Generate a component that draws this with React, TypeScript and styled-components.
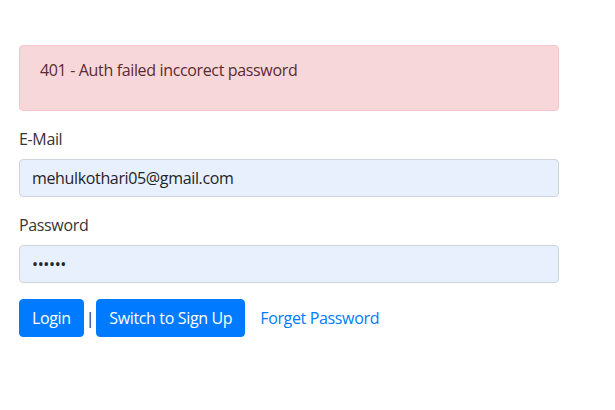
import React from "react";
import styled, { createGlobalStyle } from "styled-components";

const GlobalStyle = createGlobalStyle`
  html, body { margin: 0; padding: 0; background: #fff; }
  body {
    font-family: "Open Sans", "Noto Sans", sans-serif;
    font-size: 16px;
    line-height: 1.5;
    letter-spacing: -0.35px;
    color: #212529;
  }
  * { box-sizing: border-box; }
`;

const Page = styled.div`
  padding: 45px 0 0 19px;
  width: 559px;
`;

const Alert = styled.div`
  background: #f8d7da;
  border: 1px solid #f5c6cb;
  border-radius: 4px;
  color: #5c2a30;
  padding: 12px 20px;
  margin-bottom: 16px;
`;

const AlertText = styled.p`
  margin: 0 0 16px;
`;

const FormGroup = styled.div`
  margin-bottom: 16px;
`;

const Label = styled.label`
  display: block;
  margin-bottom: 8px;
  color: #3a3335;
`;

const Input = styled.input`
  display: block;
  width: 100%;
  height: 38px;
  padding: 6px 12px;
  font: inherit;
  letter-spacing: -0.35px;
  color: #212529;
  background: #e8f0fe;
  border: 1px solid #ced4da;
  border-radius: 4px;
  outline: none;
`;

const Actions = styled.div`
  display: flex;
  align-items: center;
`;

const Button = styled.button`
  font: inherit;
  letter-spacing: -0.35px;
  height: 38px;
  padding: 6px 12px;
  color: #fff;
  background: #007bff;
  border: 1px solid #007bff;
  border-radius: 4px;
`;

const Separator = styled.span`
  margin: 0 2px;
`;

const LinkButton = styled.a`
  color: #007bff;
  text-decoration: none;
  padding: 6px 12px;
  margin-left: 3px;
`;

export default function App() {
  return (
    <>
      <GlobalStyle />
      <Page>
        <Alert>
          <AlertText>401 - Auth failed inccorect password</AlertText>
        </Alert>
        <FormGroup>
          <Label htmlFor="email">E-Mail</Label>
          <Input id="email" type="email" defaultValue="mehulkothari05@gmail.com" />
        </FormGroup>
        <FormGroup>
          <Label htmlFor="password">Password</Label>
          <Input id="password" type="password" defaultValue="123456" />
        </FormGroup>
        <Actions>
          <Button>Login</Button>
          <Separator>|</Separator>
          <Button>Switch to Sign Up</Button>
          <LinkButton href="#">Forget Password</LinkButton>
        </Actions>
      </Page>
    </>
  );
}
